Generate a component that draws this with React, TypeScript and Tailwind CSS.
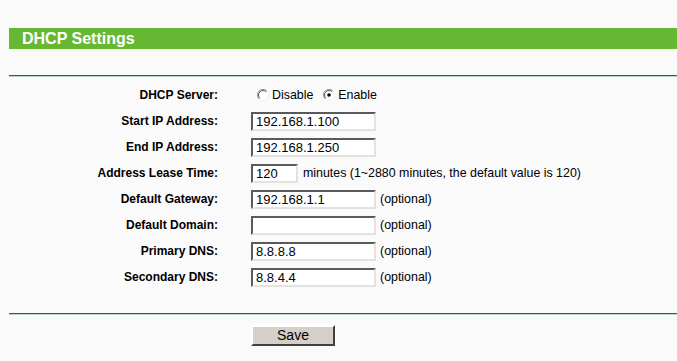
import React from 'react'

const sans = "font-['Liberation_Sans',Arial,sans-serif]"

function Radio({ checked }: { checked?: boolean }) {
  return (
    <svg width="12" height="12" viewBox="0 0 12 12" className="shrink-0">
      <circle cx="6" cy="6" r="5.5" fill="#fff" />
      <path d="M10 2 A5.5 5.5 0 0 0 2 10" fill="none" stroke="#9a9a9a" strokeWidth="1" />
      <path d="M9.2 2.8 A4.5 4.5 0 0 0 2.8 9.2" fill="none" stroke="#555" strokeWidth="1" />
      <path d="M2 10 A5.5 5.5 0 0 0 10 2" fill="none" stroke="#f0f0f0" strokeWidth="1" />
      {checked && <circle cx="6" cy="6" r="1.8" fill="#000" />}
    </svg>
  )
}

function TextBox({ value, w = 'w-[125px]' }: { value: string; w?: string }) {
  return (
    <div
      className={`${w} h-[19px] bg-white border-2 border-t-[#5a5a5a] border-l-[#5a5a5a] border-b-[#e4e2dc] border-r-[#e4e2dc] pl-[3px] text-[13px] leading-[15px] text-black`}
    >
      {value}
    </div>
  )
}

function Row({ label, children }: { label: string; children: React.ReactNode }) {
  return (
    <div className="flex items-center h-[26px]">
      <div className="w-[218px] text-right font-bold text-[12px] text-black">{label}</div>
      <div className="ml-[33px] flex items-center text-[12.4px] text-black">{children}</div>
    </div>
  )
}

export default function App() {
  return (
    <div className={`${sans} w-[677px] h-[361px] bg-[#fafafa] overflow-hidden`}>
      {/* Title bar */}
      <div className="pt-[28px] pl-[9px]">
        <div className="h-[21px] bg-[#66b832] flex items-center pl-[13px]">
          <span className="text-white font-bold text-[16px] leading-none">DHCP Settings</span>
        </div>
      </div>

      <div className="ml-[9px] mt-[26px] h-[1px] bg-[#2a6450]" />
      <div className="ml-[9px] h-[1px] bg-[#b9d6c8]" />

      <div className="mt-[5px]">
        <Row label="DHCP Server:">
          <div className="flex items-center ml-[6px]">
            <Radio />
            <span className="ml-[3px]">Disable</span>
            <span className="ml-[10px]"><Radio checked /></span>
            <span className="ml-[3px]">Enable</span>
          </div>
        </Row>
        <Row label="Start IP Address:">
          <TextBox value="192.168.1.100" />
        </Row>
        <Row label="End IP Address:">
          <TextBox value="192.168.1.250" />
        </Row>
        <Row label="Address Lease Time:">
          <TextBox value="120" w="w-[47px]" />
          <span className="ml-[5px]">minutes (1~2880 minutes, the default value is 120)</span>
        </Row>
        <Row label="Default Gateway:">
          <TextBox value="192.168.1.1" />
          <span className="ml-[4px]">(optional)</span>
        </Row>
        <Row label="Default Domain:">
          <TextBox value="" />
          <span className="ml-[4px]">(optional)</span>
        </Row>
        <Row label="Primary DNS:">
          <TextBox value="8.8.8.8" />
          <span className="ml-[4px]">(optional)</span>
        </Row>
        <Row label="Secondary DNS:">
          <TextBox value="8.8.4.4" />
          <span className="ml-[4px]">(optional)</span>
        </Row>
      </div>

      <div className="ml-[9px] mt-[23px] h-[1px] bg-[#2a6450]" />
      <div className="ml-[9px] h-[1px] bg-[#b9d6c8]" />

      <div className="mt-[8px] pl-[251px]">
        <button className="w-[84px] h-[21px] bg-[#d4d0c8] border-2 border-t-white border-l-white border-b-[#404040] border-r-[#404040] text-[14px] text-black leading-none">
          Save
        </button>
      </div>
    </div>
  )
}
